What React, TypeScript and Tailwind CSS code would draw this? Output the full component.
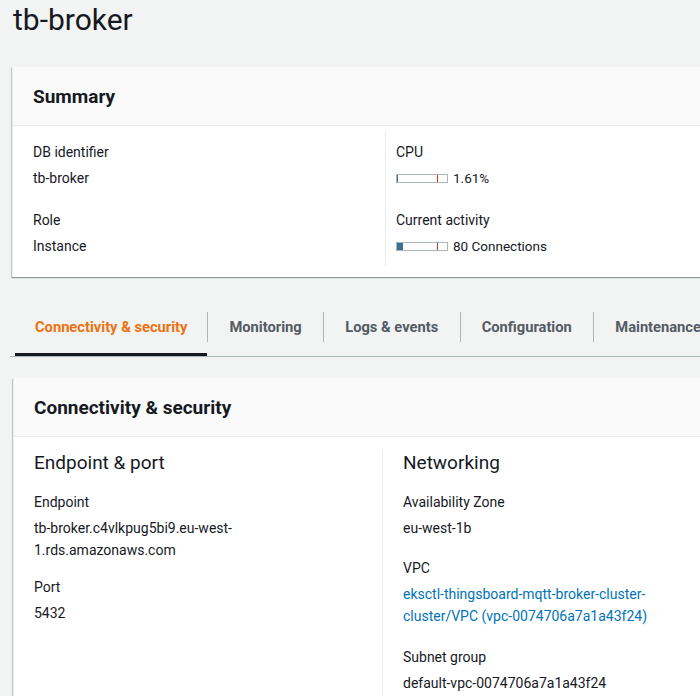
import React from 'react';

const font = { fontFamily: 'Roboto, "Liberation Sans", sans-serif' };

function Bar({ fill }: { fill: number }) {
  return (
    <div className="relative w-[52px] h-[9px] border border-[#aab7b8] bg-white">
      <div className="absolute left-0 top-0 bottom-0 bg-[#3b6e8f]" style={{ width: fill }}></div>
      <div className="absolute top-0 bottom-0 left-[40px] w-px bg-[#d13212]"></div>
    </div>
  );
}

function Field({ label, children, className = '' }: { label: string; children: React.ReactNode; className?: string }) {
  return (
    <div className={className}>
      <div className="text-[14px] leading-[22px]">{label}</div>
      <div className="mt-[4px] text-[14px] leading-[22px]">{children}</div>
    </div>
  );
}

export default function App() {
  const tabs = ['Connectivity & security', 'Monitoring', 'Logs & events', 'Configuration', 'Maintenance'];
  return (
    <div className="w-[700px] h-[696px] overflow-hidden bg-[#f2f3f3] text-[#16191f]" style={font}>
      <div className="w-[1000px]">
        <h1 className="pl-[13px] text-[30px] leading-[40px] font-normal">tb-broker</h1>

        {/* Summary */}
        <div className="ml-[12px] mt-[27px] w-[780px] bg-white border-l border-[#eaeded] shadow-[0_1px_1px_0_rgba(0,28,36,0.3),-1px_1px_1px_0_rgba(0,28,36,0.15)]">
          <div className="h-[59px] bg-[#fafafa] border-b border-[#eaeded] flex items-center pl-[20px]">
            <h2 className="text-[19px] font-bold leading-[22px] pt-[1px]">Summary</h2>
          </div>
          <div className="flex pt-[5px] pb-[11px]">
            <div className="w-[372px] pl-[20px] pt-[10px] pb-[9px]">
              <Field label="DB identifier">tb-broker</Field>
              <Field label="Role" className="mt-[20px]">Instance</Field>
            </div>
            <div className="flex-1 border-l border-[#eaeded] pl-[10px] pt-[10px]">
              <Field label="CPU">
                <div className="flex items-center gap-[5px] h-[22px]">
                  <Bar fill={1} />
                  <span className="text-[13.5px]">1.61%</span>
                </div>
              </Field>
              <Field label="Current activity" className="mt-[20px]">
                <div className="flex items-center gap-[5px] h-[22px]">
                  <Bar fill={6} />
                  <span className="text-[13.5px]">80 Connections</span>
                </div>
              </Field>
            </div>
          </div>
        </div>

        {/* Tabs */}
        <div className="ml-[10px] mt-[31px] flex border-b border-[#aab7b8] h-[49px]">
          <div className="pl-[5px] flex">
            {tabs.map((t, i) => (
              <div key={t} className="flex">
                {i > 0 && <div className="w-px h-[30px] mt-[4px] bg-[#aab7b8]"></div>}
                <div
                  className={
                    'h-full pt-[9px] text-[14.7px] leading-[20px] font-bold whitespace-nowrap ' +
                    (i === 0
                      ? 'px-[20px] text-[#ec7211] border-b-[3px] border-[#16191f]'
                      : 'pl-[21px] pr-[21.5px] text-[#545b64]')
                  }
                >
                  {t}
                </div>
              </div>
            ))}
          </div>
        </div>

        {/* Connectivity & security */}
        <div className="ml-[13px] mt-[21px] w-[780px] bg-white border-l border-[#eaeded] shadow-[0_1px_1px_0_rgba(0,28,36,0.3),-1px_1px_1px_0_rgba(0,28,36,0.15)]">
          <div className="h-[59px] bg-[#fafafa] border-b border-[#eaeded] flex items-center pl-[20px]">
            <h2 className="text-[19px] font-bold leading-[22px] pt-[1px]">Connectivity &amp; security</h2>
          </div>
          <div className="flex pt-[13px]">
            <div className="w-[368px] pl-[20px] pt-[1px]">
              <h3 className="text-[19px] leading-[24px] font-normal">Endpoint &amp; port</h3>
              <Field label="Endpoint" className="mt-[16px]">
                <div>tb-broker.c4vlkpug5bi9.eu-west-</div>
                <div>1.rds.amazonaws.com</div>
              </Field>
              <Field label="Port" className="mt-[15px]">5432</Field>
            </div>
            <div className="flex-1 border-l border-[#eaeded] pl-[20px] pt-[1px] pb-[40px]">
              <h3 className="text-[19px] leading-[24px] font-normal">Networking</h3>
              <Field label="Availability Zone" className="mt-[16px]">eu-west-1b</Field>
              <Field label="VPC" className="mt-[18px]">
                <div className="text-[#0073bb]">eksctl-thingsboard-mqtt-broker-cluster-</div>
                <div className="text-[#0073bb]">cluster/VPC (vpc-0074706a7a1a43f24)</div>
              </Field>
              <Field label="Subnet group" className="mt-[19px]">default-vpc-0074706a7a1a43f24</Field>
            </div>
          </div>
        </div>
      </div>
    </div>
  );
}
